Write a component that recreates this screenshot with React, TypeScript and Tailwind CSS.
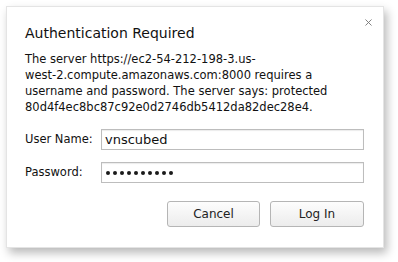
import { X } from 'lucide-react'

const font = { fontFamily: '"DejaVu Sans", "Liberation Sans", sans-serif' }

function Dots({ count }: { count: number }) {
  return (
    <div className="flex items-center gap-[3px]">
      {Array.from({ length: count }).map((_, i) => (
        <span key={i} className="w-[4px] h-[4px] rounded-full bg-[#1a1a1a]" />
      ))}
    </div>
  )
}

export default function App() {
  return (
    <div className="w-[398px] h-[262px] bg-white pt-[6px] pl-[6px]" style={font}>
      <div className="relative w-[378px] h-[242px] bg-white border border-[#e4e4e4] shadow-[3px_5px_9px_rgba(0,0,0,0.28)] flex flex-col px-[18px]">
        <button className="absolute top-[10px] right-[9px] text-[#777]">
          <X size={11} strokeWidth={2} />
        </button>
        <div className="mt-[16px] text-[14px] leading-[20px] text-[#111]">Authentication Required</div>
        <div className="mt-[8px] text-[11.5px] leading-[16px] text-[#111]">
          The server https://ec2-54-212-198-3.us-<br />
          west-2.compute.amazonaws.com:8000 requires a<br />
          username and password. The server says: protected<br />
          80d4f4ec8bc87c92e0d2746db5412da82dec28e4.
        </div>
        <div className="mt-[14px] flex flex-col gap-[12px]">
          <div className="flex items-center">
            <span className="w-[76px] text-[11.5px] text-[#111]">User Name:</span>
            <div className="w-[263px] h-[21px] border border-[#bdbdbd] shadow-[inset_0_1px_1px_rgba(0,0,0,0.08)] flex items-center px-[3px] text-[13px] text-[#111]">vnscubed</div>
          </div>
          <div className="flex items-center">
            <span className="w-[76px] text-[11.5px] text-[#111]">Password:</span>
            <div className="w-[263px] h-[21px] border border-[#bdbdbd] shadow-[inset_0_1px_1px_rgba(0,0,0,0.08)] flex items-center px-[4px]">
              <Dots count={10} />
            </div>
          </div>
        </div>
        <div className="mt-[18px] flex justify-end gap-[10px] pr-[1px]">
          <button className="w-[93px] h-[26px] rounded-[3px] border border-[#b5b5b5] bg-gradient-to-b from-[#fdfdfd] to-[#ececec] text-[12px] text-[#222]">Cancel</button>
          <button className="w-[94px] h-[26px] rounded-[3px] border border-[#b5b5b5] bg-gradient-to-b from-[#fdfdfd] to-[#ececec] text-[12px] text-[#222]">Log In</button>
        </div>
      </div>
    </div>
  )
}
